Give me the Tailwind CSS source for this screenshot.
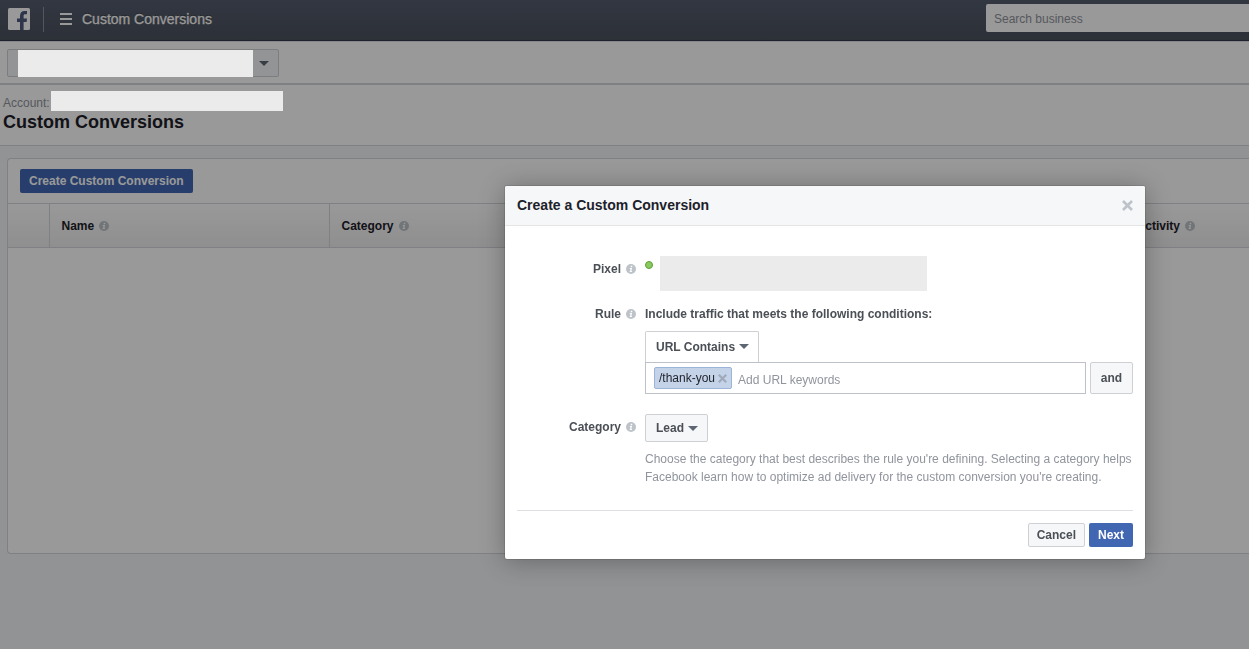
<!DOCTYPE html>
<html lang="en">
<head>
    <meta charset="UTF-8">
    <meta name="viewport" content="width=device-width, initial-scale=1">
    <title>Custom Conversions</title>
    <script src="https://cdn.jsdelivr.net/npm/@tailwindcss/browser@4"></script>
</head>
<body class="min-h-screen overflow-hidden bg-[#f3f5f8] font-['Liberation_Sans',Arial,sans-serif] text-xs text-[#1d2129]">
    <svg class="hidden">
        <symbol id="info" viewBox="0 0 10 10">
            <circle cx="5" cy="5" r="5" fill="#bec3c9"/>
            <path d="M4.9 1.8h1.5l-.3 1.4H4.6zM3.9 3.9h2.1L5.4 7h.6l-.2 1.1H3.6L3.8 7h.4l.3-2h-.8z" fill="#fff"/>
        </symbol>
        <symbol id="caret" viewBox="0 0 10 5">
            <path d="M0 0h10L5 5z" fill="currentColor"/>
        </symbol>
        <symbol id="cross" viewBox="0 0 10 10">
            <path d="M.9.9l8.2 8.2M9.1.9L.9 9.1" stroke="currentColor" stroke-width="2.4" fill="none"/>
        </symbol>
    </svg>

    <!-- Top bar -->
    <header class="flex h-[41px] items-start justify-between border-b border-[#343a4d] bg-linear-to-b from-[#545c6e] to-[#4b515d]">
        <div class="flex h-[38px] items-center pl-2">
            <a href="#" aria-label="Facebook">
                <svg class="size-[22px]" viewBox="0 0 22 22">
                    <rect width="22" height="22" rx="1.5" fill="#fff"/>
                    <path d="M12 22v-8H9v-3.4h3V8.2C12 4.800 13.700 3 16.500 3H19v3.300h-1.700c-1.300 0-1.700.6-1.700 1.700v2.600H19l-.4 3.400h-3v8z" fill="#4b5a7c"/>
                </svg>
            </a>
            <span class="ml-[13px] mt-px h-[25px] w-px bg-[#8a8f9b]"></span>
            <button class="ml-4" aria-label="Menu">
                <svg class="h-3 w-3" viewBox="0 0 12 12" fill="#fff">
                    <path d="M0 0h12v2H0zM0 5h12v2H0zM0 10h12v2H0z"/>
                </svg>
            </button>
            <span class="ml-[10px] text-sm text-white [-webkit-text-stroke:0.3px_#fff] text-shadow-[0_-1px_0_#0008]">Custom Conversions</span>
        </div>
        <input type="text" aria-label="Search business" placeholder="Search business" class="mt-1 h-7 w-[263px] rounded-l-xs bg-white px-2 pt-0.5 text-xs placeholder:text-[#90949c]">
    </header>

    <div class="flex border-b-2 border-[#d2d7db] border-t border-t-[#dfe1e5] bg-white pt-[7px] pb-1.5 pl-[7px]">
        <div class="flex h-7 w-[272px] rounded-xs border border-[#ced0d4] bg-[#f6f7f9] pl-[10px]">
            <div class="relative z-20 h-[27px] flex-1 bg-[#ebebeb]"></div>
            <button class="flex w-[25px] items-center pl-1.5 text-[#5f6673]" aria-label="Choose account">
                <svg class="h-[5px] w-[10px]"><use href="#caret"/></svg>
            </button>
        </div>
    </div>

    <div class="border-b border-[#d3d6db] bg-white pt-[6px] pb-3 pl-[3px]">
        <div class="flex h-5 items-center text-[#90949c]">
            <span class="w-12 pt-[3px]">Account:</span>
            <div class="relative z-20 h-5 w-[232px] bg-[#ebebeb]"></div>
        </div>
        <h1 class="text-lg leading-[22px] font-bold">Custom Conversions</h1>
    </div>

    <main class="mt-3 ml-[7px] min-h-[396px] rounded-l border border-r-0 border-[#d3d6db] bg-white">
        <div class="px-3 py-[10px]">
            <button class="h-6 rounded-xs bg-[#4267b2] px-[9px] font-bold text-white">Create Custom Conversion</button>
        </div>
        <table class="w-full table-fixed border-y border-[#d3d6db] text-left">
            <thead>
                <tr class="h-11 bg-linear-to-b from-white to-[#eeeeef]">
                    <th class="w-[41px] border-r border-[#d3d6db]"></th>
                    <th class="w-[280px] border-r border-[#d3d6db] px-3">
                        <span class="flex items-center gap-[5px]">Name <svg class="size-[10px]"><use href="#info"/></svg></span>
                    </th>
                    <th class="px-3">
                        <span class="flex items-center gap-[5px]">Category <svg class="size-[10px]"><use href="#info"/></svg></span>
                    </th>
                    <th class="w-[152px] px-3">
                        <span class="flex items-center gap-[5px]">Last Activity <svg class="size-[10px]"><use href="#info"/></svg></span>
                    </th>
                </tr>
            </thead>
        </table>
    </main>

    <!-- Dimmed page -->
    <div class="fixed inset-0 z-10 bg-black/40"></div>

    <!-- Dialog -->
    <div class="fixed inset-0 z-30 flex items-start justify-end pt-[186px] pr-[104px]">
        <form role="dialog" aria-labelledby="dialog-title" class="w-[640px] rounded-xs bg-white text-[#4b4f56] shadow-[0_2px_26px_rgba(0,0,0,0.3),0_0_0_1px_rgba(0,0,0,0.1)]">
            <div class="flex h-10 items-center justify-between rounded-t-xs border-b border-[#e5e5e5] bg-[#f6f7f9] px-3">
                <h2 id="dialog-title" class="pb-px text-sm font-bold text-[#1d2129]">Create a Custom Conversion</h2>
                <button type="button" class="text-[#bec3c9]" aria-label="Close">
                    <svg class="size-[11px]"><use href="#cross"/></svg>
                </button>
            </div>

            <div class="grid grid-cols-[119px_1fr] gap-x-[9px] px-3 pt-[30px] pb-6">
                <div class="flex h-[26px] items-center justify-end gap-[5px] font-bold">
                    Pixel <svg class="size-[10px]"><use href="#info"/></svg>
                </div>
                <div class="flex gap-[7px]">
                    <span class="mt-[5px] size-2 rounded-full border border-[#5ba032] bg-[#89c95f]"></span>
                    <div class="h-[35px] w-[267px] bg-[#ebebeb]"></div>
                </div>

                <div class="mt-[14px] flex h-[18px] items-center justify-end gap-[5px] font-bold">
                    <label for="rule">Rule</label> <svg class="size-[10px]"><use href="#info"/></svg>
                </div>
                <div class="mt-[14px]">
                    <p class="leading-[18px] font-bold">Include traffic that meets the following conditions:</p>
                    <div class="relative mt-2 inline-flex items-center align-top">
                        <select id="rule" class="h-[31px] appearance-none rounded-t-xs border border-b-0 border-[#ced0d4] bg-white pr-[22px] pl-[10px] font-bold">
                            <option>URL Contains</option>
                        </select>
                        <svg class="pointer-events-none absolute right-[10px] h-[5px] w-[10px] text-[#5f6673]"><use href="#caret"/></svg>
                    </div>
                    <div class="flex gap-1">
                        <div class="flex h-8 flex-1 items-center border border-[#bdc1c9] bg-white px-2">
                            <span class="flex h-[22px] items-center gap-[3px] rounded-xs border border-[#9cb4d8] bg-[#c5d3e9] px-1 text-[#1d2129]">
                                /thank-you
                                <button type="button" class="text-[#9fa9ba]" aria-label="Remove /thank-you">
                                    <svg class="size-[9px]"><use href="#cross"/></svg>
                                </button>
                            </span>
                            <input type="text" aria-label="URL keywords" placeholder="Add URL keywords" class="ml-1.5 min-w-0 flex-1 pt-[3px] outline-none placeholder:text-[#90949c]">
                        </div>
                        <button type="button" class="h-8 w-[43px] rounded-xs border border-[#ced0d4] bg-[#f6f7f9] font-bold">and</button>
                    </div>
                </div>

                <div class="mt-5 flex h-[26px] items-center justify-end gap-[5px] font-bold">
                    <label for="category">Category</label> <svg class="size-[10px]"><use href="#info"/></svg>
                </div>
                <div class="mt-5">
                    <div class="relative inline-flex items-center align-top">
                        <select id="category" class="h-7 appearance-none rounded-xs border border-[#ced0d4] bg-[#f6f7f9] pr-[22px] pl-[10px] font-bold">
                            <option>Lead</option>
                        </select>
                        <svg class="pointer-events-none absolute right-[10px] h-[5px] w-[10px] text-[#5f6673]"><use href="#caret"/></svg>
                    </div>
                    <p class="mt-2 leading-[18px] text-[#90949c]">Choose the category that best describes the rule you're defining. Selecting a category helps Facebook learn how to optimize ad delivery for the custom conversion you're creating.</p>
                </div>
            </div>

            <div class="mx-3 flex justify-end gap-1 border-t border-[#dddfe2] py-3">
                <button type="button" class="h-6 rounded-xs border border-[#ced0d4] bg-[#f6f7f9] px-2 font-bold">Cancel</button>
                <button type="submit" class="h-6 rounded-xs bg-[#4267b2] px-[9px] font-bold text-white">Next</button>
            </div>
        </form>
    </div>
</body>
</html>
